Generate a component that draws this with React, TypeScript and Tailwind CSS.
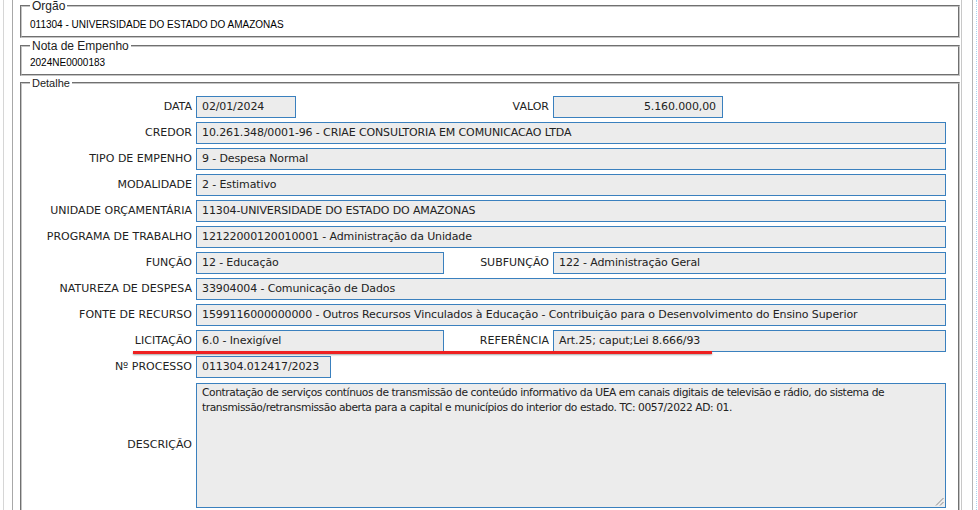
import React from "react";

const verd = { fontFamily: '"DejaVu Sans", Verdana, sans-serif' };

function Label({ children, className = "" }: { children: React.ReactNode; className?: string }) {
  return (
    <div className={"text-right pr-[4px] text-[11px] leading-[14px] text-[#222] whitespace-nowrap " + className}>
      {children}
    </div>
  );
}

function Field({ children, className = "", right = false }: { children: React.ReactNode; className?: string; right?: boolean }) {
  return (
    <div
      className={
        "h-[22px] border border-[#3a80be] bg-[#ececec] pl-[5px] flex items-center text-[11px] text-[#222] tracking-[-0.12px] whitespace-nowrap overflow-hidden " +
        (right ? "justify-end pr-[6px] " : "pr-[1px] ") +
        className
      }
    >
      {children}
    </div>
  );
}

export default function App() {
  return (
    <div className="relative w-[978px] h-[510px] overflow-hidden bg-white flex" style={{ fontFamily: '"Liberation Sans", Arial, sans-serif' }}>
      {/* left frame lines */}
      <div className="w-[3px] shrink-0" />
      <div className="w-[9px] shrink-0 border-l border-[#d6d6d6]" />
      <div className="w-[8px] shrink-0 border-l border-[#a8a8a8]" />

      <div className="w-[940px] shrink-0 flex flex-col gap-[2px]">
        <fieldset className="border-2 [border-style:groove] border-[#c4c4c4] pl-[8px] pr-[8px] pt-[6px] pb-[4px]">
          <legend className="px-[2px] text-[12px] leading-[12px] text-[#222]">Órgão</legend>
          <div className="text-[10px] leading-[14px] text-black">011304 - UNIVERSIDADE DO ESTADO DO AMAZONAS</div>
        </fieldset>
        <fieldset className="border-2 [border-style:groove] border-[#c4c4c4] pl-[8px] pr-[8px] pt-[4px] pb-[4px]">
          <legend className="px-[2px] text-[12px] leading-[12px] text-[#222]">Nota de Empenho</legend>
          <div className="text-[10px] leading-[14px] text-black">2024NE0000183</div>
        </fieldset>
        <fieldset className="-mt-[1px] border-2 [border-style:groove] border-[#c4c4c4] pl-[8px] pr-[12px] pt-[7px] pb-[10px]">
          <legend className="px-[2px] text-[11px] leading-[12px] text-[#222]">Detalhe</legend>
          <div className="grid grid-cols-[166px_248px_109px_393px] gap-y-[4px] items-center" style={verd}>
            <Label>DATA</Label>
            <div><Field className="w-[100px]">02/01/2024</Field></div>
            <Label>VALOR</Label>
            <div><Field className="w-[170px]" right>5.160.000,00</Field></div>

            <Label>CREDOR</Label>
            <Field className="col-span-3">10.261.348/0001-96 - CRIAE CONSULTORIA EM COMUNICACAO LTDA</Field>

            <Label>TIPO DE EMPENHO</Label>
            <Field className="col-span-3">9 - Despesa Normal</Field>

            <Label>MODALIDADE</Label>
            <Field className="col-span-3">2 - Estimativo</Field>

            <Label>UNIDADE ORÇAMENTÁRIA</Label>
            <Field className="col-span-3">11304-UNIVERSIDADE DO ESTADO DO AMAZONAS</Field>

            <Label>PROGRAMA DE TRABALHO</Label>
            <Field className="col-span-3">12122000120010001 - Administração da Unidade</Field>

            <Label>FUNÇÃO</Label>
            <Field>12 - Educação</Field>
            <Label>SUBFUNÇÃO</Label>
            <Field>122 - Administração Geral</Field>

            <Label>NATUREZA DE DESPESA</Label>
            <Field className="col-span-3">33904004 - Comunicação de Dados</Field>

            <Label>FONTE DE RECURSO</Label>
            <Field className="col-span-3">1599116000000000 - Outros Recursos Vinculados à Educação - Contribuição para o Desenvolvimento do Ensino Superior</Field>

            <Label>LICITAÇÃO</Label>
            <Field>6.0 - Inexigível</Field>
            <Label>REFERÊNCIA</Label>
            <Field>Art.25; caput;Lei 8.666/93</Field>

            <Label>Nº PROCESSO</Label>
            <div className="col-span-3"><Field className="w-[135px]">011304.012417/2023</Field></div>

            <Label>DESCRIÇÃO</Label>
            <div className="relative col-span-3 h-[125px] mt-[1px] border border-[#3a80be] bg-[#ececec] pl-[5px] pr-0 pt-[1px] text-[10.7px] leading-[15px] text-[#222] tracking-[-0.42px]">
              Contratação de serviços contínuos de transmissão de conteúdo informativo da UEA em canais digitais de televisão e rádio, do sistema de transmissão/retransmissão aberta para a capital e municípios do interior do estado. TC: 0057/2022 AD: 01.
              <svg className="absolute right-[1px] bottom-[1px]" width="9" height="9" viewBox="0 0 9 9">
                <line x1="8.5" y1="1" x2="1" y2="8.5" stroke="#8a8a8a" strokeWidth="1" />
                <line x1="8.5" y1="5" x2="5" y2="8.5" stroke="#8a8a8a" strokeWidth="1" />
              </svg>
            </div>
          </div>
        </fieldset>
      </div>

      {/* right frame lines */}
      <div className="w-[1px] shrink-0" />
      <div className="w-[11px] shrink-0 border-l border-[#c8c8c8]" />
      <div className="w-[4px] shrink-0 border-l border-[#b4b4b4]" />
      <div className="w-[2px] shrink-0 border-l border-dotted border-[#a9d2ef]" />

      {/* red annotation underline */}
      <div className="absolute left-[133px] top-[351px] w-[579px] h-[3px] bg-[#ee2020] shadow-[0_1px_2px_rgba(0,0,0,0.35)]" />
    </div>
  );
}
